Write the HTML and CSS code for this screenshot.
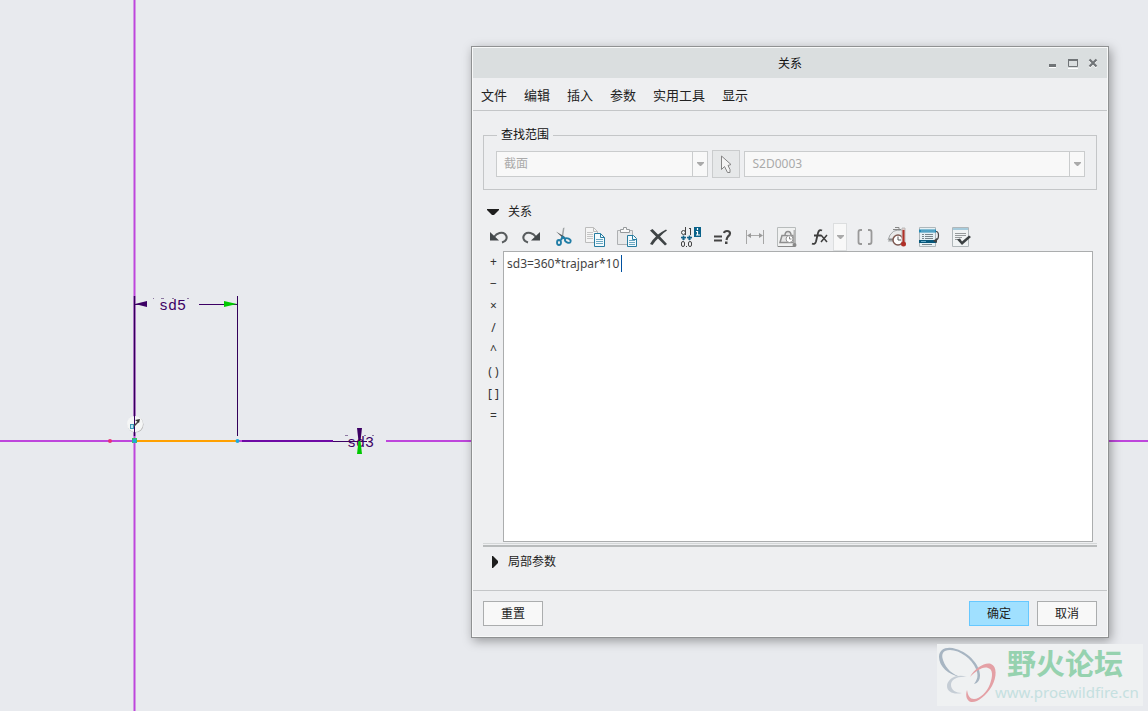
FILE: index.html
```html
<!DOCTYPE html>
<html lang="zh-CN">
<head>
<meta charset="utf-8">
<title>关系</title>
<link rel="stylesheet" href="styles.css">
</head>
<body>
<main class="desktop">
  <svg class="sketch" aria-label="草绘">
    <!-- reference axes -->
    <g class="axis">
      <path d="M0 441H333M386 441H4000M134.500 0V3000"/>
    </g>
    <!-- dimension sd5 -->
    <path d="M134.500 296V436" stroke="#32005a" stroke-width="1.500"/>
    <path d="M237.500 296V436" stroke="#32005a"/>
    <path d="M135 304.500H147M199 304.500H237" stroke="#3c0064"/>
    <path d="M135 304l12-3v6z" fill="#3c0064"/>
    <path d="M237 304l-13-3v6z" fill="#00c800"/>
    <path d="M153 298.500h1M161 298.500h3M172 298.500h2M187 298.500h2" stroke="#8c78a0"/>
    <text class="dim" x="159" y="310">sd5</text>
    <!-- dimension sd3 -->
    <path d="M242 441H333" stroke="#6e0aa5" stroke-width="2"/>
    <path d="M333 441.500H367" stroke="#3c0064"/>
    <path d="M345 435.500h3M364 435.500h2M372 435.500h2" stroke="#8c78a0"/>
    <text class="dim" x="347" y="447">sd3</text>
    <path d="M357 428h5l-1.500 13h-2z" fill="#3c0064"/>
    <path d="M357 454h5l-1.500-13h-2z" fill="#00c800"/>
    <!-- sketched line and its end points -->
    <path d="M137 441H237" stroke="#ffa000" stroke-width="2"/>
    <circle cx="110" cy="441" r="2" fill="#e63278"/>
    <circle cx="135.500" cy="424.500" r="8" fill="#b4b4b4"/>
    <circle cx="135" cy="424" r="8" fill="#f5f6f6"/>
    <path d="M134.500 415V434" stroke="#32005a"/>
    <path d="M133 427l5-5" stroke="#444" stroke-width="1.500"/>
    <path d="M135 420l5-1-1 4z" fill="#333"/>
    <rect x="130.500" y="424.500" width="3" height="4" fill="#b4e6f5" stroke="#3c96b4"/>
    <rect x="132" y="438" width="5" height="5" fill="#3cbe64"/>
    <circle cx="134.500" cy="441" r="2" fill="#1eaadc"/>
    <circle cx="237.500" cy="441" r="2" fill="#1eaadc"/>
  </svg>

  <section class="dialog" role="dialog" aria-labelledby="dlg-title">
    <header class="titlebar">
      <h1 class="title" id="dlg-title">关系</h1>
      <div class="winbtns">
        <button class="winbtn" aria-label="最小化"><svg width="12" height="12"><path d="M2 10.500h7" stroke="#fff"/><path d="M2 8.500h7" stroke="#707477" stroke-width="3"/></svg></button>
        <button class="winbtn" aria-label="最大化"><svg width="12" height="12"><path d="M1 11.500h10" stroke="#fff"/><path d="M1.500 3v6.500h9V3" fill="none" stroke="#707477"/><path d="M1 3h10" stroke="#707477" stroke-width="2"/></svg></button>
        <button class="winbtn" aria-label="关闭"><svg width="12" height="12"><path d="M2.500 3.500l7 7M9.500 3.500l-7 7" stroke="#fff" stroke-width="2"/><path d="M2.500 2.500l7 7M9.500 2.500l-7 7" stroke="#707477" stroke-width="2.200"/></svg></button>
      </div>
    </header>

    <nav class="menubar">
      <button class="menu">文件</button><button class="menu">编辑</button><button class="menu">插入</button><button class="menu">参数</button><button class="menu">实用工具</button><button class="menu">显示</button>
    </nav>

    <div class="content">
      <fieldset class="scope">
        <legend class="scope-title">查找范围</legend>
        <div class="scope-row">
          <div class="combo combo-type">
            <select class="combo-field" aria-label="对象类型" disabled><option>截面</option></select>
            <span class="combo-arrow"><svg width="7" height="4"><path d="M0 0h7v1L4 4H3L0 1z" fill="#aaa"/></svg></span>
          </div>
          <button class="pick" aria-label="选择" disabled><svg width="26" height="26"><path d="M8.500 5v13.500l3-3 3 6h2.500v-3L15 14.500l3-1z" fill="#f4f4f4" stroke="#858585"/></svg></button>
          <div class="combo combo-name">
            <select class="combo-field" aria-label="对象名称" disabled><option>S2D0003</option></select>
            <span class="combo-arrow"><svg width="7" height="4"><path d="M0 0h7v1L4 4H3L0 1z" fill="#aaa"/></svg></span>
          </div>
        </div>
      </fieldset>

      <button class="section section-open" aria-expanded="true"><svg class="mark" viewBox="0 0 14 14"><path d="M1 4h12v1L8 10H6L1 5z" fill="#1e1e1e"/></svg>关系</button>

      <div class="toolbar" role="toolbar" aria-label="关系工具">
        <button class="tool" aria-label="撤消"><svg viewBox="0 0 32 28"><path d="M11 14C14 10 19 8.500 22 11C25 14 24 18 19 19.500" fill="none" stroke="#585c5e" stroke-width="2"/><path d="M7 9v8.500h9z" fill="#42474a"/></svg></button>
        <button class="tool" aria-label="重做"><svg viewBox="0 0 32 28"><path d="M21 14C18 10 13 8.500 10 11C7 14 8 18 13 19.500" fill="none" stroke="#585c5e" stroke-width="2"/><path d="M25 9v8.500h-9z" fill="#42474a"/></svg></button>
        <button class="tool" aria-label="剪切"><svg viewBox="0 0 32 28"><path d="M16 5l1.500-.5L16 15l-2 2z" fill="#a0a4a6"/><path d="M9 8.500l9 5.500-1 2z" fill="#4b5052"/><path d="M16 13l-2 4M15 14l4 2" stroke="#207da6" stroke-width="2"/><ellipse cx="12" cy="19.500" rx="2" ry="2.500" fill="none" stroke="#207da6" stroke-width="1.800"/><ellipse cx="20.800" cy="17.500" rx="3" ry="2" transform="rotate(25 20.800 17.500)" fill="none" stroke="#207da6" stroke-width="1.800"/></svg></button>
        <button class="tool" aria-label="复制"><svg viewBox="0 0 32 28"><path d="M6.500 4.500h8l4 4v11h-12z" fill="#f5f5f5" stroke="#bcbcbc"/><path d="M14.500 4.500v4h4" fill="none" stroke="#bcbcbc"/><path d="M8 9.500h6M8 11.500h6M8 13.500h6M8 15.500h6" stroke="#c5c5c5"/><path d="M15.500 10.500h6l4 4v9h-10z" fill="#f2fafd" stroke="#267ca0"/><path d="M21.500 10.500v4h4" fill="none" stroke="#267ca0"/><path d="M17 16.500h7M17 18.500h7M17 20.500h7" stroke="#6ca8c2"/></svg></button>
        <button class="tool" aria-label="粘贴"><svg viewBox="0 0 32 28"><path d="M6.500 7.500h15v14h-15z" fill="#e8e9ea" stroke="#aeb0b2"/><path d="M9.500 9.500v-3h3v-2h3v2h3v3z" fill="#fafafa" stroke="#969a9c"/><path d="M16.500 12.500h6l3 3v8h-9z" fill="#f2fafd" stroke="#267ca0"/><path d="M21.500 12.500v4h4" fill="none" stroke="#267ca0"/><path d="M18 17.500h6M18 19.500h6M18 21.500h6" stroke="#6ca8c2"/></svg></button>
        <button class="tool" aria-label="删除"><svg viewBox="0 0 32 28"><path d="M7 7.500L9.500 6L15 11.500Q20 8 23 6.500L24 7.500Q20 10 17 13.500L24 21l-2 1.500-7-7Q12 18 9.500 22L7 21Q9 17 13 13.500z" fill="#3f4446"/></svg></button>
        <button class="tool" aria-label="切换尺寸"><svg viewBox="0 0 32 28"><path d="M10.500 4v8M15.500 5v7M14 5.500h2" stroke="#444"/><ellipse cx="8.500" cy="9.500" rx="2" ry="2" fill="none" stroke="#444"/><path d="M8.500 12.500v4M6 14.500h5M14.500 12.500v4M12 14.500h5" stroke="#15638a" stroke-width="1.500"/><path d="M6.500 15.500h4l-2 2zM12.500 15.500h4l-2 2z" fill="#15638a"/><rect x="6.500" y="18.500" width="3" height="5" rx="1.500" fill="none" stroke="#444"/><path d="M11 23.500h1" stroke="#444"/><rect x="13.500" y="18.500" width="3" height="5" rx="1.500" fill="none" stroke="#444"/><path d="M19 4h7v10h-7z" fill="#09628a"/><path d="M22.500 5v2M21 8.500h2M22.500 8v4M21 12h4" stroke="#fff" stroke-width="1.200"/></svg></button>
        <button class="tool" aria-label="计算值"><svg viewBox="0 0 32 28"><path d="M7 13.500h8M7 17.500h8" stroke="#444" stroke-width="2"/><path d="M17 10Q17.500 8 20 8Q23 8 23 10.500Q23 12 21 13.500Q20 14.500 19.500 17" fill="none" stroke="#444" stroke-width="2.200"/><path d="M18 18.500h2.500V21H18z" fill="#444"/></svg></button>
        <button class="tool" aria-label="尺寸显示"><svg viewBox="0 0 32 28"><path d="M7.500 7v14M24.500 7v14" stroke="#a6a6a6"/><path d="M9 12.500h14" stroke="#aaa"/><path d="M8 12.500l4-2.500v5zM24 12.500l-4-2.500v5z" fill="#999"/></svg></button>
        <button class="tool" aria-label="单位"><svg viewBox="0 0 32 28"><path d="M6.500 4.500h18v19h-18z" fill="#f0f1f1" stroke="#b8bcbc"/><path d="M7 23.500h17" stroke="#888"/><path d="M9 19.500l2-7h3q0-4 3-4t3 4h2l1 7z" fill="#e5e5e5" stroke="#8e8e8e" stroke-width="1.500"/><path d="M14 12.500h6" stroke="#8e8e8e"/><circle cx="18.500" cy="16" r="3.500" fill="#fff" stroke="#949494"/><path d="M18.500 13.500V16h2" fill="none" stroke="#888"/><path d="M23.500 7v15" stroke="#b4b4b4" stroke-width="2"/><circle cx="23.500" cy="22" r="2" fill="#888"/></svg></button>
        <button class="tool tool-fx" aria-label="函数"><svg viewBox="0 0 32 28"><path d="M19 7.500Q16 6 15 10l-2 8.500Q12 22 9 20.500M11 12.500h7" fill="none" stroke="#3d3d3d" stroke-width="1.800"/><path d="M18 12l6 7M24 12l-6 7" stroke="#3d3d3d" stroke-width="1.500"/></svg></button>
        <button class="fx-more" aria-label="更多函数"><svg width="9" height="5"><path d="M1 0h7v1L5 4H4L1 1z" fill="#aaa"/></svg></button>
        <button class="tool" aria-label="括号"><svg viewBox="0 0 32 28"><path d="M13 7h-1.500Q9.500 7 9.500 9v10q0 2 2 2H13M19 7h1.500q2 0 2 2v10q0 2-2 2H19" fill="none" stroke="#999" stroke-width="1.800"/></svg></button>
        <button class="tool" aria-label="质量属性"><svg viewBox="0 0 32 28"><path d="M7 17l2-5Q12 7 17 7h4l2 4-6 7H7" fill="#e9eaea" stroke="#a1a5a7"/><path d="M12 6.500h8M14 4.500h4v3" fill="none" stroke="#888"/><path d="M8 16.500h6" stroke="#888" stroke-width="2"/><circle cx="17" cy="17" r="5" fill="#fff" stroke="#7d5850" stroke-width="1.500"/><path d="M17 13.500V17h3" fill="none" stroke="#555"/><path d="M21 5h3v15h-3z" fill="#e5c8c5" stroke="#bbb"/><path d="M22.500 7v13" stroke="#af3028" stroke-width="2"/><circle cx="22.500" cy="21" r="2.500" fill="#af3028"/></svg></button>
        <button class="tool" aria-label="排序"><svg viewBox="0 0 32 28"><path d="M6.500 4.500h16v19h-16z" fill="#e6f1f5" stroke="#aeb7bb"/><path d="M6 8h17" stroke="#248ab5" stroke-width="3"/><path d="M8 8h14" stroke="#80bcd5"/><path d="M6 18.500h17" stroke="#07587c" stroke-width="3"/><path d="M8 18.500h5" stroke="#62a9c8"/><path d="M9 11.500h2M12 11.500h8M9 13.500h2M12 13.500h8M9 15.500h2M12 15.500h8M9 21.500h10" stroke="#77858b"/><path d="M23 8.500q2.500 0 2.500 4T22 18" fill="none" stroke="#444" stroke-width="1.200"/><path d="M20 18l4-3v5z" fill="#444"/></svg></button>
        <button class="tool" aria-label="校验"><svg viewBox="0 0 32 28"><path d="M7.500 4.500h16v19h-16z" fill="#f0f3f4" stroke="#b0b7ba"/><path d="M8 6h15" stroke="#a6cbdc" stroke-width="2"/><path d="M10 10.500h11M10 12.500h11M10 14.500h7M10 16.500h4" stroke="#969a9c"/><path d="M12 16.500l3-1 2 3 7-6 2 1.500-9 8z" fill="#3c4143"/></svg></button>
      </div>

      <div class="editor">
        <div class="ops">
          <button class="op">+</button><button class="op">−</button><button class="op">×</button><button class="op">/</button><button class="op">^</button><button class="op">( )</button><button class="op">[ ]</button><button class="op">=</button>
        </div>
        <div class="code-wrap">
          <textarea class="code" aria-label="关系式" spellcheck="false">sd3=360*trajpar*10</textarea>
          <span class="caret"></span>
        </div>
      </div>
      <div class="splitter"></div>
      <button class="section section-local" aria-expanded="false"><svg class="mark" viewBox="0 0 14 14"><path d="M6 1h1l5 5v2l-5 5H6z" fill="#1e1e1e"/></svg>局部参数</button>
    </div>

    <footer class="actions">
      <button class="btn btn-reset">重置</button>
      <button class="btn btn-ok">确定</button>
      <button class="btn">取消</button>
    </footer>
  </section>

  <aside class="brand">
    <svg class="brand-logo" viewBox="0 0 60 60">
      <path fill-rule="evenodd" fill="#a7b5c2" d="M2 13C2 5 10 2 19 5C33 9 43 22 43 31C43 36 41 39 37 40C40 36 42 32 39 25C35 15 23 6 13 6C6 6 4 10 6 16C9 25 16 31 24 33C11 31 2 22 2 13z"/>
      <path fill-rule="evenodd" fill="#c5cdd5" d="M30 33C20 29 10 35 10 42C10 48 17 51 25 49C19 49 14 46 14 41C14 35 21 32 30 33z"/>
      <path fill-rule="evenodd" fill="#e4a0a5" d="M33 33C38 24 48 18 54 20C60 22 60 33 55 42C49 52 40 59 34 58C30 57 28 52 30 46C31 52 33 55 37 55C43 55 50 48 53 40C56 32 56 25 51 24C46 22 39 27 33 33z"/>
    </svg>
    <div class="brand-text">
      <span class="brand-name">野火论坛</span>
      <a class="brand-url" href="#">www.proewildfire.cn</a>
    </div>
  </aside>
</main>
</body>
</html>
```
FILE: styles.css
```css
* { box-sizing: border-box; }
body {
  margin: 0;
  background: #e8eaee;
  color: #222;
  font: 12px/16px "Noto Sans", "Noto Sans CJK SC", sans-serif;
}
button, select, textarea { font: inherit; color: inherit; }
button { padding: 0; border: 0; background: none; }
svg { display: block; }

.desktop { position: relative; min-height: 100vh; overflow: hidden; }
.sketch { position: absolute; inset: 0; width: 100%; height: 100%; }
.axis { stroke: #be46dc; stroke-width: 2; }
.dim { font: 15px "Liberation Mono", monospace; fill: #3c0064; }

/* dialog window */
.dialog {
  position: absolute;
  top: 46px;
  left: 471px;
  right: 39px;
  border: 1px solid #8f9192;
  background: #eeeff1;
  box-shadow: inset 0 0 0 1px #f8f9f9, 2px 3px 10px rgba(0, 0, 0, 0.35);
}
.titlebar {
  display: grid;
  grid-template-columns: 1fr auto 1fr;
  align-items: center;
  height: 30px;
  margin: 1px 1px 0;
  background: #dadedf;
}
.title { grid-column: 2; margin: 0; padding-top: 2px; font: inherit; color: #111; }
.winbtns { display: flex; justify-content: flex-end; gap: 8px; padding-right: 8px; }
.menubar {
  display: flex;
  gap: 17px;
  margin: 0 1px;
  padding: 1px 8px 0;
  height: 33px;
  border-bottom: 1px solid #c4c6c8;
  font-size: 13px;
}

.content { padding: 16px 11px 0; }
.scope {
  min-width: 0;
  margin: 0;
  padding: 7px 11px 11px 12px;
  border: 1px solid #c4c6c8;
}
.scope-title { margin-left: 1px; padding: 0 4px; color: #111; }
.scope-row { display: flex; align-items: center; gap: 4px; }
.combo { position: relative; height: 26px; background: #f8f8f8; border: 1px solid #cacccd; color: #aaa; }
.combo-type { flex: 212; }
.combo-name { flex: 341; }
.combo-field {
  appearance: none;
  width: 100%;
  height: 100%;
  padding: 0 24px 0 7px;
  border: 0;
  background: none;
  color: #aaa;
  opacity: 1;
}
.combo-arrow {
  position: absolute;
  inset: 0 0 0 auto;
  display: grid;
  place-items: center;
  width: 15px;
  border-left: 1px solid #cacccd;
}
.pick { width: 28px; height: 28px; border: 1px solid #cacccd; background: #e6e8e9; }

.section { display: flex; align-items: center; gap: 8px; height: 18px; padding-left: 3px; }
.section-open { margin-top: 13px; }
.section-local { margin: 6px 0 19px; }
.mark { width: 14px; height: 14px; }

.toolbar { display: flex; height: 28px; margin-top: 2px; }
.tool { width: 32px; height: 28px; }
.tool svg { width: 32px; height: 28px; }
.tool-fx { width: 30px; overflow: hidden; }
.fx-more {
  display: grid;
  place-items: center;
  width: 14px;
  margin-right: 2px;
  border: 1px solid #dcdedf;
  background: #f8f8f8;
}

.editor { display: flex; height: 291px; }
.ops { display: flex; flex-direction: column; width: 20px; padding-left: 1px; }
.op { height: 22px; line-height: 16px; color: #333; white-space: nowrap; }
.code-wrap { position: relative; flex: 1; margin-right: 4px; }
.code {
  display: block;
  width: 100%;
  height: 100%;
  padding: 4px 3px;
  border: 1px solid #abadae;
  outline: 0;
  resize: none;
  background: #fff;
  color: #444;
  font: 12px/16px "Noto Sans", sans-serif;
}
.caret { position: absolute; top: 4px; left: 118px; width: 1px; height: 17px; background: #0050a0; }
.splitter { height: 4px; margin-top: 1px; border-top: 1px solid #d4d7d8; border-bottom: 2px solid #b8bbbc; }

.actions {
  display: flex;
  gap: 8px;
  margin: 0 1px;
  padding: 10px 10px 11px;
  border-top: 1px solid #c4c6c8;
}
.btn { width: 60px; height: 25px; border: 1px solid #abadae; background: #f8f8f8; }
.btn-reset { margin-right: auto; }
.btn-ok { border-color: #66c8ff; background: #a0e0ff; }

/* forum badge */
.brand {
  position: absolute;
  right: 5px;
  bottom: 5px;
  display: flex;
  width: 206px;
  height: 62px;
  background: #eff1f2;
}
.brand-logo { flex: none; width: 60px; height: 60px; }
.brand-text { display: flex; flex-direction: column; margin: -2px 0 0 -2px; }
.brand-name { padding-left: 12px; font: bold 29px/41px "Noto Sans CJK SC", sans-serif; color: #96d2af; }
.brand-url { font: 15px/19px "Noto Sans", sans-serif; color: #c5e0e0; text-decoration: none; }
```
